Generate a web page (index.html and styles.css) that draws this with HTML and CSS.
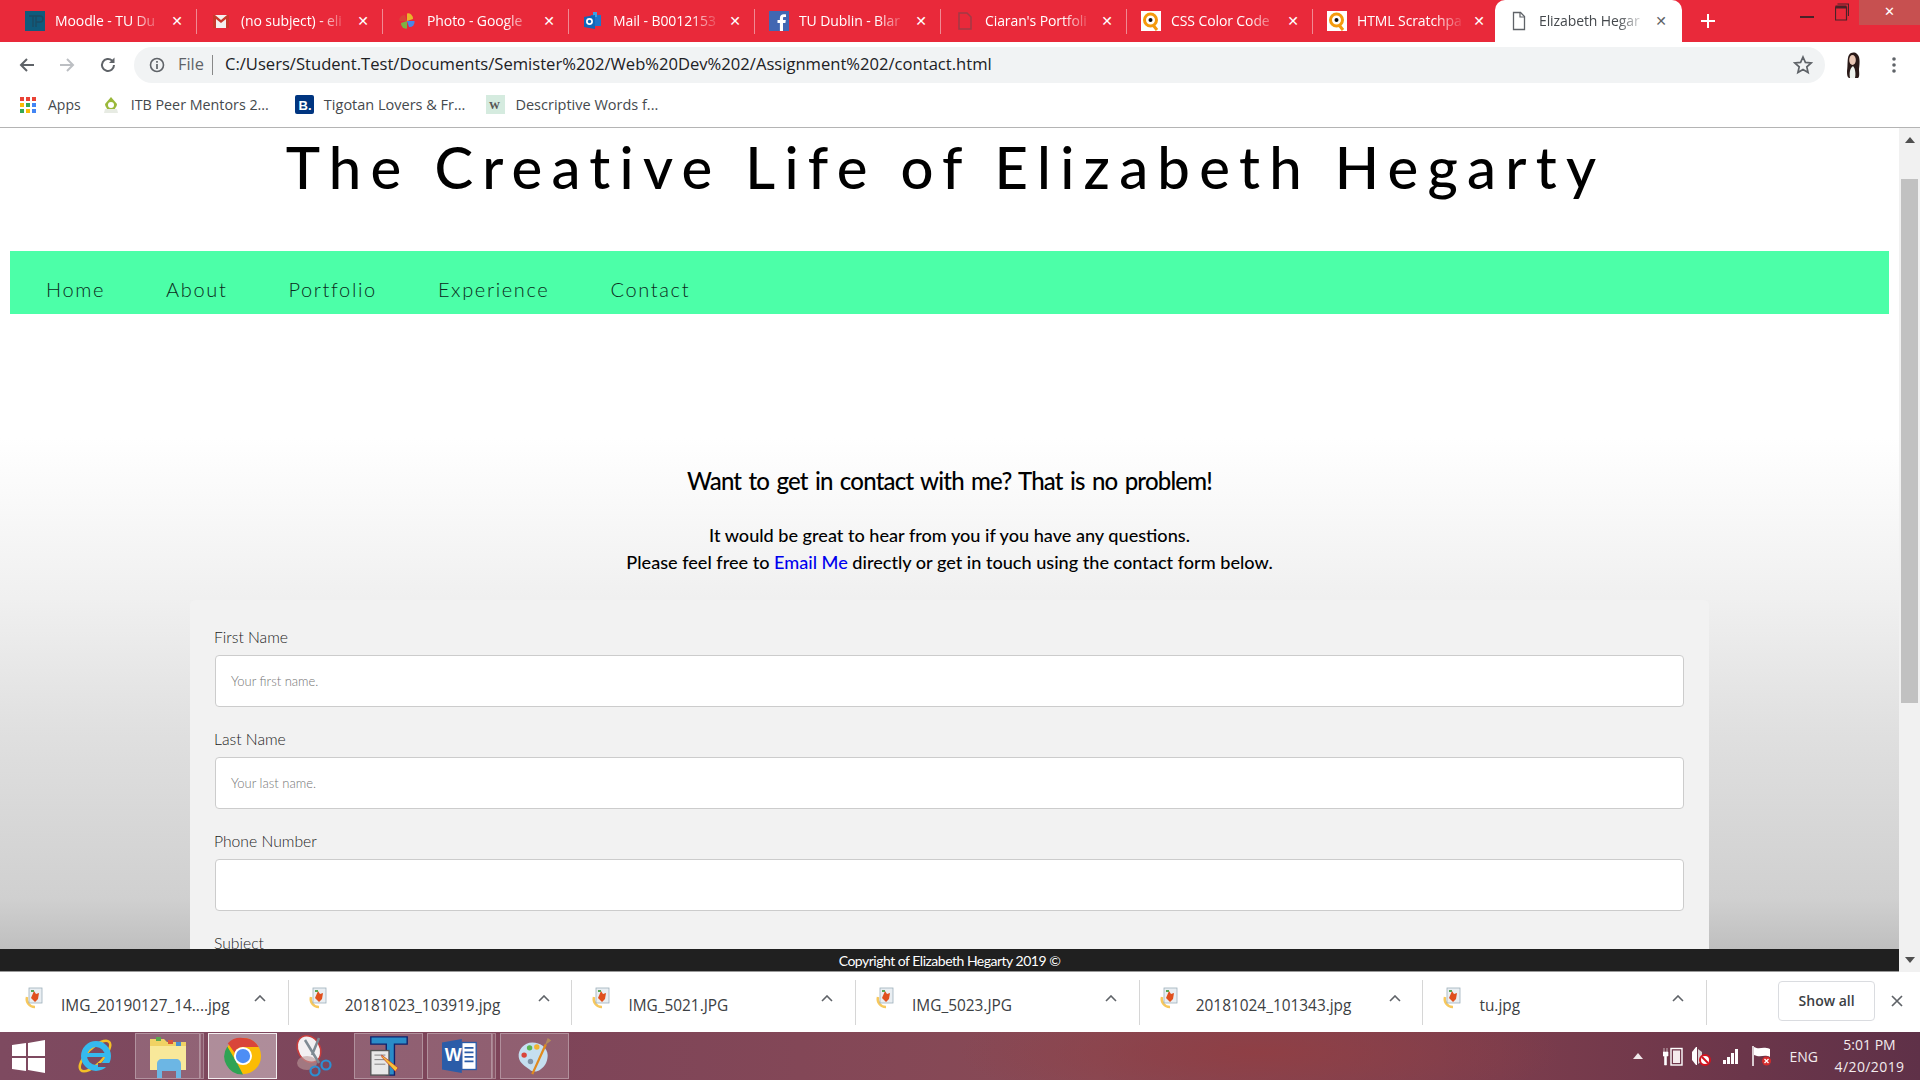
FILE: index.html
```html
<!DOCTYPE html>
<html lang="en">
<head>
<meta charset="utf-8">
<title>Elizabeth Hegarty</title>
<link rel="stylesheet" href="styles.css">
</head>
<body>
<div class="screen">
  <div class="tabbar">
    <div class="tab"><svg class="fav" viewBox="0 0 20 20"><rect width="20" height="20" fill="#0f5b7c"/><path d="M4 5h8M8 5v11M11 5h4a3 3 0 0 1 0 6h-4M11 5v11" stroke="#1b4a63" stroke-width="1.4" fill="none"/></svg><span class="tab-title">Moodle - TU Du</span><span class="tab-x">✕</span></div><i class="tab-sep"></i>
    <div class="tab"><svg class="fav" viewBox="0 0 20 20"><rect x="2" y="4" width="16" height="13" fill="#f4f0ee"/><path d="M2 4v13h3V8l5 4 5-4v9h3V4h-2l-6 5-6-5z" fill="#c9372c"/></svg><span class="tab-title">(no subject) - eli</span><span class="tab-x">✕</span></div><i class="tab-sep"></i>
    <div class="tab"><svg class="fav" viewBox="0 0 20 20"><path d="M10 10V2.500a5 5 0 0 1 6 5.500z" fill="#e8b52a"/><path d="M10 10h7.500a5 5 0 0 1-5.500 6z" fill="#4a86e8"/><path d="M10 10v7.500a5 5 0 0 1-6-5.500z" fill="#7cb342"/><path d="M10 10H2.500a5 5 0 0 1 5.500-6z" fill="#db4437"/></svg><span class="tab-title">Photo - Google</span><span class="tab-x">✕</span></div><i class="tab-sep"></i>
    <div class="tab"><svg class="fav" viewBox="0 0 20 20"><path d="M8 4h10v11H8z" fill="#1f74c9"/><path d="M10 1h4v5h-4z" fill="#39a1e6"/><path d="M1 6l11-2v14L1 16z" fill="#1166b8"/><circle cx="6.500" cy="10.500" r="2.600" fill="none" stroke="#fff" stroke-width="1.700"/></svg><span class="tab-title">Mail - B0012153</span><span class="tab-x">✕</span></div><i class="tab-sep"></i>
    <div class="tab"><svg class="fav" viewBox="0 0 20 20"><rect width="20" height="20" fill="#4267b2"/><path d="M14 20v-8h2.400l.4-3H14V7.500c0-.9.300-1.400 1.400-1.400H17V3.400c-.3 0-1.200-.1-2.300-.1-2.300 0-3.800 1.400-3.800 3.900V9H8.500v3h2.400v8z" fill="#fff"/></svg><span class="tab-title">TU Dublin - Blar</span><span class="tab-x">✕</span></div><i class="tab-sep"></i>
    <div class="tab"><svg class="fav" viewBox="0 0 20 20"><path d="M4 2h8l4 4v12H4z" fill="none" stroke="#a13a45" stroke-width="1.500"/></svg><span class="tab-title">Ciaran's Portfoli</span><span class="tab-x">✕</span></div><i class="tab-sep"></i>
    <div class="tab"><svg class="fav" viewBox="0 0 20 20"><rect width="20" height="20" fill="#fff"/><circle cx="9.500" cy="9" r="6" fill="none" stroke="#f59a0c" stroke-width="3"/><circle cx="9.500" cy="9" r="2" fill="#111"/><path d="M12 14l4 5" stroke="#f59a0c" stroke-width="3"/></svg><span class="tab-title">CSS Color Code</span><span class="tab-x">✕</span></div><i class="tab-sep"></i>
    <div class="tab"><svg class="fav" viewBox="0 0 20 20"><rect width="20" height="20" fill="#fff"/><circle cx="9.500" cy="9" r="6" fill="none" stroke="#f59a0c" stroke-width="3"/><circle cx="9.500" cy="9" r="2" fill="#111"/><path d="M12 14l4 5" stroke="#f59a0c" stroke-width="3"/></svg><span class="tab-title">HTML Scratchpa</span><span class="tab-x">✕</span></div>
    <div class="tab tab-active"><svg class="fav" viewBox="0 0 20 20"><path d="M4.500 1.500h7l4 4v13h-11z" fill="#fff" stroke="#5f6368" stroke-width="1.300"/><path d="M11 1.500v4.500h4.500" fill="none" stroke="#5f6368" stroke-width="1.200"/></svg><span class="tab-title">Elizabeth Hegar</span><span class="tab-x">✕</span></div>
    <svg class="newtab" viewBox="0 0 16 16"><path d="M8 1v14M1 8h14" stroke="#fff" stroke-width="2"/></svg>
    <div class="winctl">
      <svg class="win-min" viewBox="0 0 14 14"><path d="M0 10h14" stroke="#4a2228" stroke-width="2"/></svg>
      <svg class="win-max" viewBox="0 0 14 18"><path d="M2.500 1h11v12M.5 4h11v13H.5z" fill="none" stroke="#4a2228" stroke-width="1.200"/><path d="M.5 4h11" stroke="#4a2228" stroke-width="3"/></svg>
      <span class="win-close">✕</span>
    </div>
  </div>

  <div class="toolbar">
    <svg class="nav-ic" viewBox="0 0 18 18"><path d="M16 9H3M9 3L3 9l6 6" fill="none" stroke="#5f6368" stroke-width="2"/></svg>
    <svg class="nav-ic nav-fwd" viewBox="0 0 18 18"><path d="M2 9h13M9 3l6 6-6 6" fill="none" stroke="#bcbfc3" stroke-width="2"/></svg>
    <svg class="nav-ic nav-reload" viewBox="0 0 18 18"><path d="M15 9a6 6 0 1 1-1.800-4.300" fill="none" stroke="#5f6368" stroke-width="2"/><path d="M15.500 1.500v5.500H10z" fill="#5f6368"/></svg>
    <div class="omnibox">
      <svg class="info-ic" viewBox="0 0 16 16"><circle cx="8" cy="8" r="6.500" fill="none" stroke="#5f6368" stroke-width="1.600"/><path d="M8 7v5M8 4v1.800" stroke="#5f6368" stroke-width="1.700"/></svg>
      <span class="omni-file">File</span><i class="omni-sep"></i>
      <span class="omni-url">C:/Users/Student.Test/Documents/Semister%202/Web%20Dev%202/Assignment%202/contact.html</span>
      <svg class="star-ic" viewBox="0 0 20 20"><path d="M10 2l2.400 5.400 5.800.6-4.400 3.900 1.300 5.700L10 14.600l-5.100 3 1.300-5.700L1.800 8l5.800-.6z" fill="none" stroke="#5f6368" stroke-width="1.700"/></svg>
    </div>
    <svg class="avatar" viewBox="0 0 20 28"><path d="M6 27h9c2-1 1-6 1-9 1-7 1-13-2-15-2-2-6-2-8 1C4 7 5 14 4 20c0 3 0 6 2 7z" fill="#2a1a18"/><ellipse cx="9.500" cy="9" rx="3.300" ry="5" fill="#e8c6b4"/><path d="M7 27c-1-5 0-10 3-12 2 2 3 7 2 12z" fill="#eef3ee"/></svg>
    <svg class="menu-ic" viewBox="0 0 4 18"><circle cx="2" cy="3" r="1.800" fill="#5f6368"/><circle cx="2" cy="9" r="1.800" fill="#5f6368"/><circle cx="2" cy="15" r="1.800" fill="#5f6368"/></svg>
  </div>

  <div class="bookmarks">
    <div class="bm bm-apps"><svg class="bm-ic" viewBox="0 0 16 16"><rect x="0" y="0" width="4" height="4" fill="#ea4335"/><rect x="6" y="0" width="4" height="4" fill="#ea4335"/><rect x="12" y="0" width="4" height="4" fill="#ea4335"/><rect x="0" y="6" width="4" height="4" fill="#fbbc05"/><rect x="6" y="6" width="4" height="4" fill="#34a853"/><rect x="12" y="6" width="4" height="4" fill="#4285f4"/><rect x="0" y="12" width="4" height="4" fill="#34a853"/><rect x="6" y="12" width="4" height="4" fill="#fbbc05"/><rect x="12" y="12" width="4" height="4" fill="#4285f4"/></svg><span>Apps</span></div>
    <div class="bm bm-itb"><svg class="bm-ic" viewBox="0 0 16 16"><path d="M8 0l6 7a6 6 0 0 1-12 0z" fill="#9ab83a"/><circle cx="8" cy="8" r="3" fill="#fff"/><path d="M2 12h12l1 4H1z" fill="#e7ebe3"/></svg><span>ITB Peer Mentors 2...</span></div>
    <div class="bm bm-tig"><svg class="bm-ic bm-big" viewBox="0 0 19 19"><rect width="19" height="19" rx="2" fill="#003580"/><text x="3.500" y="15" class="bm-b">B.</text></svg><span>Tigotan Lovers &amp; Fr...</span></div>
    <div class="bm bm-wrd"><svg class="bm-ic bm-big" viewBox="0 0 19 19"><rect width="19" height="19" fill="#d5ebdf"/><text x="3" y="14" class="bm-w">W</text></svg><span>Descriptive Words f...</span></div>
  </div>

  <div class="viewport">
    <div class="webcol">
      <main class="page">
        <h1 class="site-title">The Creative Life of Elizabeth Hegarty</h1>
        <nav class="site-nav">
          <a>Home</a><a>About</a><a>Portfolio</a><a>Experience</a><a>Contact</a>
        </nav>
        <h2 class="contact-head">Want to get in contact with me? That is no problem!</h2>
        <p class="contact-text">It would be great to hear from you if you have any questions.<br>Please feel free to <span class="email">Email Me</span> directly or get in touch using the contact form below.</p>
        <form class="contact-form">
          <label class="f-label">First Name</label>
          <div class="f-input"><span class="ph">Your first name.</span></div>
          <label class="f-label">Last Name</label>
          <div class="f-input"><span class="ph">Your last name.</span></div>
          <label class="f-label">Phone Number</label>
          <div class="f-input"></div>
          <label class="f-label">Subject</label>
          <div class="f-input"></div>
        </form>
      </main>
      <footer class="site-footer">Copyright of Elizabeth Hegarty 2019 ©</footer>
    </div>
    <div class="scrollbar">
      <svg class="sb-arrow" viewBox="0 0 10 6"><path d="M5 0l5 6H0z" fill="#505050"/></svg>
      <div class="sb-thumb"></div>
      <svg class="sb-arrow sb-down" viewBox="0 0 10 6"><path d="M5 6l5-6H0z" fill="#505050"/></svg>
    </div>
  </div>

  <div class="shelf">
    <div class="dl"><svg class="dl-ic" viewBox="0 0 20 22"><path d="M3 10a8 8 0 0 0 8 10" fill="none" stroke="#f7c85c" stroke-width="2.500"/><rect x="5" y="1" width="13" height="15" fill="#e9eef2" stroke="#9db0bb" stroke-width=".8"/><path d="M7 11l3-7 2 3 3-1-1 6-3 3z" fill="#e0501d"/><path d="M7 3h3v2H7z" fill="#5aa650"/></svg><span class="dl-name">IMG_20190127_14....jpg</span><svg class="dl-caret" viewBox="0 0 12 7"><path d="M1 6l5-5 5 5" fill="none" stroke="#5f6368" stroke-width="1.600"/></svg></div>
    <div class="dl"><svg class="dl-ic" viewBox="0 0 20 22"><path d="M3 10a8 8 0 0 0 8 10" fill="none" stroke="#f7c85c" stroke-width="2.500"/><rect x="5" y="1" width="13" height="15" fill="#e9eef2" stroke="#9db0bb" stroke-width=".8"/><path d="M7 11l3-7 2 3 3-1-1 6-3 3z" fill="#e0501d"/><path d="M7 3h3v2H7z" fill="#5aa650"/></svg><span class="dl-name">20181023_103919.jpg</span><svg class="dl-caret" viewBox="0 0 12 7"><path d="M1 6l5-5 5 5" fill="none" stroke="#5f6368" stroke-width="1.600"/></svg></div>
    <div class="dl"><svg class="dl-ic" viewBox="0 0 20 22"><path d="M3 10a8 8 0 0 0 8 10" fill="none" stroke="#f7c85c" stroke-width="2.500"/><rect x="5" y="1" width="13" height="15" fill="#e9eef2" stroke="#9db0bb" stroke-width=".8"/><path d="M7 11l3-7 2 3 3-1-1 6-3 3z" fill="#e0501d"/><path d="M7 3h3v2H7z" fill="#5aa650"/></svg><span class="dl-name">IMG_5021.JPG</span><svg class="dl-caret" viewBox="0 0 12 7"><path d="M1 6l5-5 5 5" fill="none" stroke="#5f6368" stroke-width="1.600"/></svg></div>
    <div class="dl"><svg class="dl-ic" viewBox="0 0 20 22"><path d="M3 10a8 8 0 0 0 8 10" fill="none" stroke="#f7c85c" stroke-width="2.500"/><rect x="5" y="1" width="13" height="15" fill="#e9eef2" stroke="#9db0bb" stroke-width=".8"/><path d="M7 11l3-7 2 3 3-1-1 6-3 3z" fill="#e0501d"/><path d="M7 3h3v2H7z" fill="#5aa650"/></svg><span class="dl-name">IMG_5023.JPG</span><svg class="dl-caret" viewBox="0 0 12 7"><path d="M1 6l5-5 5 5" fill="none" stroke="#5f6368" stroke-width="1.600"/></svg></div>
    <div class="dl"><svg class="dl-ic" viewBox="0 0 20 22"><path d="M3 10a8 8 0 0 0 8 10" fill="none" stroke="#f7c85c" stroke-width="2.500"/><rect x="5" y="1" width="13" height="15" fill="#e9eef2" stroke="#9db0bb" stroke-width=".8"/><path d="M7 11l3-7 2 3 3-1-1 6-3 3z" fill="#e0501d"/><path d="M7 3h3v2H7z" fill="#5aa650"/></svg><span class="dl-name">20181024_101343.jpg</span><svg class="dl-caret" viewBox="0 0 12 7"><path d="M1 6l5-5 5 5" fill="none" stroke="#5f6368" stroke-width="1.600"/></svg></div>
    <div class="dl"><svg class="dl-ic" viewBox="0 0 20 22"><path d="M3 10a8 8 0 0 0 8 10" fill="none" stroke="#f7c85c" stroke-width="2.500"/><rect x="5" y="1" width="13" height="15" fill="#e9eef2" stroke="#9db0bb" stroke-width=".8"/><path d="M7 11l3-7 2 3 3-1-1 6-3 3z" fill="#e0501d"/><path d="M7 3h3v2H7z" fill="#5aa650"/></svg><span class="dl-name">tu.jpg</span><svg class="dl-caret" viewBox="0 0 12 7"><path d="M1 6l5-5 5 5" fill="none" stroke="#5f6368" stroke-width="1.600"/></svg></div>
    <button class="showall" type="button">Show all</button>
    <svg class="shelf-x" viewBox="0 0 12 12"><path d="M1 1l10 10M11 1L1 11" stroke="#5f6368" stroke-width="1.700"/></svg>
  </div>

  <div class="taskbar">
    <svg class="tb-start" viewBox="0 0 33 33"><path d="M0 5l14-2v13H0zM16 3l17-3v16H16zM0 18h14v13L0 29zM16 18h17v15l-17-3z" fill="#fff"/></svg>
    <svg class="tb-ie" viewBox="0 0 38 42"><ellipse cx="19" cy="21" rx="20" ry="8" transform="rotate(-45 19 21)" fill="none" stroke="#f4bf26" stroke-width="2.500"/><circle cx="20" cy="21" r="12" fill="none" stroke="#35b9ee" stroke-width="6"/><path d="M9 20h23" stroke="#35b9ee" stroke-width="4"/><path d="M22 28h12l-3 4h-9z" fill="#7a4660"/></svg>
    <div class="tb-box tb-exp"><svg viewBox="0 0 40 44" class="tb-svg"><path d="M2 5h14l3 3h19v28H2z" fill="#f0d264"/><path d="M2 12h36v24H2z" fill="#f8e89a"/><rect x="8" y="3" width="5" height="4" fill="#5aa650"/><rect x="20" y="6" width="5" height="4" fill="#d8543a"/><rect x="28" y="8" width="5" height="4" fill="#4a90d0"/><path d="M9 44V30c0-3 2-5 5-5h14c3 0 5 2 5 5v14h-5v-7H14v7z" fill="#6cb6e4"/></svg></div>
    <i class="tb-sliver"></i>
    <div class="tb-box tb-chrome"><svg viewBox="0 0 40 40" class="tb-svg tb-chr"><circle cx="20" cy="20" r="19" fill="#fbbc05"/><path d="M20 1a19 19 0 0 1 16.500 9.500H20a9.500 9.500 0 0 0-8.800 6L4 6.500A19 19 0 0 1 20 1z" fill="#d9453a"/><path d="M3.500 10L13 26l7 13.500A19 19 0 0 1 3.500 10z" fill="#2fa354"/><circle cx="20" cy="20" r="9.500" fill="#fff"/><circle cx="20" cy="20" r="7.500" fill="#4d8ef5"/></svg></div>
    <svg class="tb-snip" viewBox="0 0 38 46"><ellipse cx="14" cy="16" rx="11" ry="14" transform="rotate(-30 14 16)" fill="#f3f0f2" stroke="#c73d3d" stroke-width="1.500"/><ellipse cx="12" cy="30" rx="10" ry="7" fill="#b99" opacity=".6"/><path d="M10 7l14 23M24 5L17 22" stroke="#7f8a93" stroke-width="2.500"/><circle cx="20" cy="38" r="4.500" fill="none" stroke="#2c8fd3" stroke-width="2.200"/><circle cx="31" cy="32" r="4.500" fill="none" stroke="#2c8fd3" stroke-width="2.200"/></svg>
    <div class="tb-box tb-t"><svg viewBox="0 0 44 46" class="tb-svg tb-wide"><path d="M2 2h40v8H28v34H19V10H2z" fill="#2a8cc8" stroke="#10206a" stroke-width="1.500"/><rect x="2" y="17" width="20" height="27" fill="#e8e8e8" stroke="#555" stroke-width="1.500"/><path d="M6 22h12M6 27h12M6 32h12" stroke="#777"/><path d="M14 22l18 14-3 4-15-16z" fill="#f7c23a" stroke="#b33" stroke-width=".8"/></svg></div>
    <div class="tb-box tb-word"><svg viewBox="0 0 40 38" class="tb-svg tb-wide2"><path d="M0 4l22-4v38L0 34z" fill="#2b5ca8"/><rect x="22" y="4" width="16" height="30" fill="#fff" stroke="#2b5ca8" stroke-width="1.500"/><path d="M25 10h10M25 15h10M25 20h10M25 25h10" stroke="#2b5ca8" stroke-width="2"/><text x="3" y="25" class="tb-w">W</text></svg></div>
    <i class="tb-sliver"></i>
    <div class="tb-box tb-paint"><svg viewBox="0 0 38 42" class="tb-svg tb-wide2"><path d="M16 6C7 6 0 14 1 22c1 7 7 10 12 14 3 3 8 3 12 0 6-4 8-10 8-16C33 12 25 6 16 6z" fill="#c5dff0"/><circle cx="7" cy="20" r="3" fill="#d9453a"/><circle cx="13" cy="12" r="3" fill="#5bb450"/><circle cx="21" cy="11" r="3" fill="#f2b430"/><circle cx="14" cy="27" r="3" fill="#8094a8"/><path d="M16 41L31 8" stroke="#e08a1e" stroke-width="2.500"/><path d="M30 9l3-8 4 3z" fill="#b38a5a"/></svg></div>
    <div class="tray">
      <svg class="tr-up" viewBox="0 0 10 6"><path d="M5 0l5 6H0z" fill="#f0e8ea"/></svg>
      <svg class="tr-bat" viewBox="0 0 20 20"><path d="M1 2v4M4 2v4M0 6h5v4H3.500v9h-2v-9H0z" fill="#fff" stroke="#fff" stroke-width=".6"/><rect x="8" y="2.500" width="11" height="16.500" fill="none" stroke="#fff" stroke-width="1.400"/><rect x="10" y="4.500" width="7" height="12.500" fill="#f4eaec"/></svg>
      <svg class="tr-vol" viewBox="0 0 20 20"><path d="M6 6V1l-1 0L1 6v8l4 5h1v-5z" fill="#fff"/><path d="M7 3v15l4-3V6z" fill="#d9d2d4"/><circle cx="14" cy="14" r="5" fill="#fff" stroke="#d3131f" stroke-width="2"/><path d="M11 11l6 6" stroke="#d3131f" stroke-width="2"/></svg>
      <svg class="tr-sig" viewBox="0 0 16 16"><path d="M0 12h3v4H0zM4 9h3v7H4zM8 5h3v11H8zM12 1h3v15h-3z" fill="#fff"/></svg>
      <svg class="tr-flag" viewBox="0 0 20 20"><path d="M1 0v20" stroke="#fff" stroke-width="1.500"/><path d="M2 1c6 3 8-1 16 2v8c-6-3-9 1-16-2z" fill="#fff"/><circle cx="14.500" cy="15" r="4.500" fill="#d62c2c"/><path d="M12.500 13l4 4M16.500 13l-4 4" stroke="#fff" stroke-width="1.300"/></svg>
      <span class="tr-lang">ENG</span>
      <div class="tr-clock"><span>5:01 PM</span><span class="tr-date">4/20/2019</span></div>
    </div>
  </div>
</div>
</body>
</html>
```
FILE: styles.css
```css
* { box-sizing: border-box; }
html, body { margin: 0; padding: 0; height: 100%; overflow: hidden; }
.screen { width: 1920px; height: 1080px; display: flex; flex-direction: column; font-family: "Open Sans", "Noto Sans", sans-serif; background: #fff; }

/* tab strip */
.tabbar { height: 42px; background: #e9293a; display: flex; align-items: center; padding-left: 11px; flex: none; }
.tab { width: 185px; height: 42px; display: flex; align-items: center; padding-left: 14px; flex: none; }
.tab-sep { width: 1px; height: 25px; background: #f08a93; flex: none; }
.fav { width: 20px; height: 20px; flex: none; }
.tab-title { width: 108px; margin-left: 10px; overflow: hidden; white-space: nowrap; font-size: 14px; line-height: 18px; padding-bottom: 1px; letter-spacing: -.1px; color: #fff; flex: none; -webkit-mask-image: linear-gradient(to right, #000 72%, transparent 100%); mask-image: linear-gradient(to right, #000 72%, transparent 100%); }
.tab-x { width: 16px; margin-left: 6px; font-size: 14px; font-weight: 700; color: #fff; text-align: center; font-family: "DejaVu Sans", sans-serif; flex: none; }
.tab-active { background: #fff; width: 187px; height: 42px; border-radius: 10px 10px 0 0; margin-left: -3px; }
.tab-active .tab-title { color: #45494d; }
.tab-active .tab-x { color: #5f6368; }
.newtab { width: 16px; height: 16px; margin-left: 18px; flex: none; }
.winctl { margin-left: auto; height: 42px; display: flex; align-items: flex-start; flex: none; }
.win-min { width: 14px; height: 14px; margin-top: 7px; }
.win-max { width: 14px; height: 18px; margin-left: 21px; margin-top: 3px; }
.win-close { width: 61px; height: 25px; margin-left: 10px; background: #c75050; color: #fff; font-size: 13px; text-align: center; line-height: 24px; font-family: "DejaVu Sans", sans-serif; }

/* toolbar */
.toolbar { height: 46px; display: flex; align-items: center; padding-left: 18px; background: #fff; flex: none; }
.nav-ic { width: 18px; height: 18px; flex: none; }
.nav-fwd { margin-left: 22px; }
.nav-reload { margin-left: 23px; }
.omnibox { width: 1691px; height: 36px; margin-left: 17px; border-radius: 18px; background: #f1f3f4; display: flex; align-items: center; padding-left: 15px; flex: none; }
.info-ic { width: 16px; height: 16px; flex: none; }
.omni-file { margin-left: 13px; font-size: 16.400px; line-height: 22px; padding-bottom: 2px; color: #5f6368; }
.omni-sep { width: 1px; height: 20px; background: #888; margin-left: 8px; }
.omni-url { margin-left: 12px; font-size: 16.600px; line-height: 22px; padding-bottom: 2px; color: #202124; white-space: nowrap; }
.star-ic { width: 20px; height: 20px; margin-left: auto; margin-right: 12px; }
.avatar { width: 20px; height: 28px; margin-left: 18px; flex: none; }
.menu-ic { width: 4px; height: 18px; margin-left: 29px; flex: none; }

/* bookmarks */
.bookmarks { height: 40px; display: flex; align-items: center; border-bottom: 1px solid #b4b4b4; padding: 0 0 6px 20px; flex: none; }
.bm { display: flex; align-items: center; font-size: 14.500px; color: #45494d; white-space: nowrap; }
.bm-ic { width: 16px; height: 16px; margin-right: 12px; flex: none; }
.bm-big { width: 19px; height: 19px; margin-right: 10px; }
.bm-apps { font-size: 14px; }
.bm-itb { margin-left: 22px; font-size: 14.300px; }
.bm-tig { margin-left: 26px; }
.bm-wrd { margin-left: 21px; }
.bm-b { font: 700 13px "Liberation Sans", sans-serif; fill: #fff; }
.bm-w { font: 700 11px "Liberation Serif", serif; fill: #555; }

/* viewport */
.viewport { flex: 1; min-height: 0; display: flex; }
.webcol { flex: 1; min-width: 0; display: flex; flex-direction: column; }
.page { flex: 1; min-height: 0; overflow: hidden; padding: 0 10px; font-family: Lato, "Open Sans", sans-serif; color: #000;
  background: linear-gradient(to bottom, #fff 0, #fff 310px, #f0f0f0 470px, #e0e0e0 600px, #d0d0d0 770px, #bfbfbf 821px); }
.site-title { margin: 0; height: 123px; padding: 4px 8px 0 0; text-align: center; font-size: 58px; line-height: 70px; font-weight: 500; letter-spacing: 9.250px; white-space: nowrap; }
.site-nav { height: 63px; background: #4cffa8; display: flex; align-items: center; padding: 13px 0 0 36px; gap: 61px; }
.site-nav a { font-size: 20px; font-weight: 300; letter-spacing: 1.650px; color: #0b2b20; }
.contact-head { margin: 152px 0 0; text-align: center; font-size: 24px; line-height: 30px; font-weight: 500; letter-spacing: -.8px; word-spacing: 2px; color: #000; }
.contact-text { margin: 26px 0 0; text-align: center; font-size: 18.100px; line-height: 27px; font-weight: 500; }
.email { color: #00e; }
.contact-form { width: 1519px; margin: 24px 0 0 180px; padding: 25px 25px 0 24px; background: #f2f2f2; border-radius: 5px; }
.f-label { display: block; height: 24px; margin-bottom: 6px; font-size: 15.700px; line-height: 24px; font-weight: 300; color: #222; }
.f-input { height: 52px; margin-bottom: 20px; margin-left: 1px; background: #fff; border: 1px solid #ccc; border-radius: 4px; padding-left: 15px; display: flex; align-items: center; }
.ph { font-size: 13px; font-weight: 300; color: #757575; }
.site-footer { height: 23px; flex: none; background: #202020; color: #fff; text-align: center; font-family: Lato, sans-serif; font-size: 14px; line-height: 23px; letter-spacing: -.5px; border-bottom: 1px solid #999; }
.scrollbar { width: 21px; flex: none; background: #f1f1f1; display: flex; flex-direction: column; align-items: center; padding-top: 9px; }
.sb-arrow { width: 10px; height: 6px; flex: none; }
.sb-thumb { width: 17px; height: 524px; background: #c1c1c1; margin-top: 36px; }
.sb-down { margin-top: auto; margin-bottom: 9px; }

/* download shelf */
.shelf { height: 60px; display: flex; align-items: center; background: #fff; flex: none; position: relative; padding-left: 5px; }
.dl { width: 283.700px; height: 45px; display: flex; align-items: center; padding-left: 19px; border-right: 1px solid #d6d6d6; font-size: 15.400px; color: #3c4043; flex: none; position: relative; }
.dl-ic { width: 20px; height: 22px; margin-top: -8px; flex: none; }
.dl-name { margin-left: 17px; white-space: nowrap; padding-top: 7px; }
.dl-caret { width: 12px; height: 7px; position: absolute; left: 249px; top: 15px; }
.showall { width: 97px; height: 40px; margin-left: 71px; margin-top: -3px; background: #fff; border: 1px solid #dadce0; border-radius: 4px; font: 600 14px "Open Sans", sans-serif; color: #3c4043; flex: none; padding: 0; }
.shelf-x { width: 12px; height: 12px; margin-left: 16px; margin-top: -3px; flex: none; }

/* taskbar */
.taskbar { height: 48px; flex: none; display: flex; align-items: center; padding-left: 12px;
  background: radial-gradient(ellipse 300px 60px at 1260px 20px, #8f3f45, transparent), linear-gradient(to right, #7e4a60 0, #7d4459 500px, #894a55 1100px, #7c3d4d 1500px, #5f3148 1920px); }
.tb-start { width: 33px; height: 33px; flex: none; }
.tb-ie { width: 38px; height: 42px; margin-left: 31px; flex: none; }
.tb-box { height: 46px; width: 65px; border: 1px solid rgba(255,255,255,.3); background: rgba(255,255,255,.15); display: flex; align-items: center; justify-content: center; flex: none; }
.tb-svg { width: 40px; height: 44px; }
.tb-chr { width: 38px; height: 38px; }
.tb-wide { width: 40px; height: 44px; }
.tb-wide2 { width: 36px; height: 38px; }
.tb-exp { margin-left: 21px; }
.tb-sliver { width: 4px; height: 46px; border: 1px solid rgba(255,255,255,.25); background: rgba(255,255,255,.1); flex: none; margin-right: 4px; }
.tb-chrome { width: 69px; background: rgba(255,255,255,.38); border: 1px solid rgba(255,255,255,.85); }
.tb-snip { width: 38px; height: 46px; margin-left: 18px; flex: none; }
.tb-t { width: 69px; margin-left: 21px; }
.tb-word { margin-left: 4px; }
.tb-paint { width: 69px; }
.tb-w { font: 700 20px "Liberation Sans", sans-serif; fill: #fff; }
.tray { margin-left: auto; display: flex; align-items: center; height: 48px; color: #f3ecee; flex: none; }
.tr-up { width: 10px; height: 6px; }
.tr-bat { width: 20px; height: 20px; margin-left: 20px; }
.tr-vol { width: 20px; height: 20px; margin-left: 8px; }
.tr-sig { width: 16px; height: 16px; margin-left: 12px; }
.tr-flag { width: 20px; height: 20px; margin-left: 13px; }
.tr-lang { margin-left: 18px; font-size: 14px; }
.tr-clock { width: 85px; margin-left: 17px; padding-right: 16px; display: flex; flex-direction: column; align-items: center; font-size: 14px; line-height: 22px; }
.tr-date { letter-spacing: .4px; white-space: nowrap; }
```
